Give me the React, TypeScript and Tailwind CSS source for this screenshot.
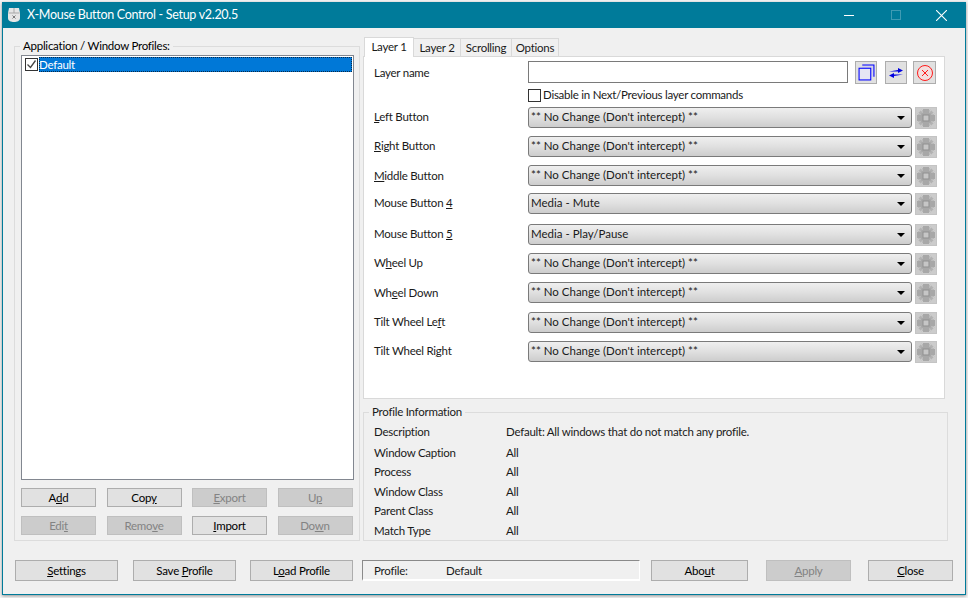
import type { ReactNode } from "react";

function Btn({
  children,
  width,
  disabled,
  className = "",
}: {
  children: ReactNode;
  width: string;
  disabled?: boolean;
  className?: string;
}) {
  return (
    <div
      className={`flex items-center justify-center border ${width} ${className} ${
        disabled
          ? "border-[#bfbfbf] bg-[#cccccc] text-[#838383]"
          : "border-[#adadad] bg-[#e1e1e1] text-black"
      }`}
    >
      <span className="pt-px">{children}</span>
    </div>
  );
}

function GearIcon() {
  return (
    <svg viewBox="0 0 20 20" className="h-[20px] w-[20px]">
      <g fill="#b2b2b2">
        <rect x="7" y="1" width="6" height="18" transform="rotate(45 10 10)" />
        <rect x="7" y="1" width="6" height="18" transform="rotate(-45 10 10)" />
      </g>
      <g fill="#a8a8a8">
        <rect x="7" y="1" width="6" height="18" />
        <rect x="1" y="7" width="18" height="6" />
        <circle cx="10" cy="10" r="6.5" />
      </g>
      <path d="M5.5 2.5l1 2M14.5 2.5l-1 2M5.5 17.5l1-2M14.5 17.5l-1-2M2.5 5.5l2 1M17.5 5.5l-2 1M2.5 14.5l2-1M17.5 14.5l-2-1" stroke="#e4e4e4" strokeWidth="1" strokeDasharray="1 1" />
      <rect x="7" y="7" width="6" height="6" fill="#c6c6c6" stroke="#8f8f8f" />
    </svg>
  );
}

function Combo({ children }: { children: ReactNode }) {
  return (
    <div className="flex h-[21px] w-[384px] items-center rounded-[3px] border-[1.5px] border-[#7a7a7a] bg-gradient-to-b from-[#efefef] via-[#e0e0e0] to-[#cdcdcd] pl-[2px] pr-[6px] tracking-normal">
      <span className="flex-1 pb-px">{children}</span>
      <span className="h-0 w-0 border-x-[4px] border-t-[4px] border-x-transparent border-t-black" />
    </div>
  );
}

const NO_CHANGE = "** No Change (Don't intercept) **";

const buttonRows: { label: ReactNode; value: ReactNode; height: string; labelClass: string }[] = [
  { label: <><u>L</u>eft Button</>, value: NO_CHANGE, height: "h-[29px]", labelClass: "" },
  { label: <><u>R</u>ight Button</>, value: NO_CHANGE, height: "h-[29px]", labelClass: "" },
  { label: <><u>M</u>iddle Button</>, value: NO_CHANGE, height: "h-[28px]", labelClass: "mt-px" },
  { label: <>Mouse Button <u>4</u></>, value: "Media - Mute", height: "h-[31px]", labelClass: "" },
  { label: <>Mouse Button <u>5</u></>, value: "Media - Play/Pause", height: "h-[29px]", labelClass: "" },
  { label: <>W<u>h</u>eel Up</>, value: NO_CHANGE, height: "h-[29px]", labelClass: "" },
  { label: <>Wh<u>e</u>el Down</>, value: NO_CHANGE, height: "h-[30px]", labelClass: "mt-px" },
  { label: <>Tilt Wheel Le<u>f</u>t</>, value: NO_CHANGE, height: "h-[29px]", labelClass: "" },
  { label: <>Tilt Wheel Ri<u>g</u>ht</>, value: NO_CHANGE, height: "h-[29px]", labelClass: "" },
];

const profileInfo = [
  { label: "Window Caption", height: "h-[19px]" },
  { label: "Process", height: "h-[20px]" },
  { label: "Window Class", height: "h-[19px]" },
  { label: "Parent Class", height: "h-[20px]" },
  { label: "Match Type", height: "h-[19px]" },
];

export default function App() {
  return (
    <div className="h-[598px] w-[968px] overflow-hidden bg-[#f4f4f4] [font-family:'Lato',sans-serif] text-[11.5px] leading-[16px] tracking-[-0.25px] text-[#1a1a1a]">
      <div className="ml-[2px] mt-[2px] flex h-[593px] w-[964px] flex-col border-x border-b border-[#007b9a] bg-[#f0f0f0] shadow-[0_1px_3px_rgba(0,0,0,0.4)]">
        {/* Title bar */}
        <div className="flex h-[26px] shrink-0 items-center bg-[#007b9a] text-white">
          <svg viewBox="0 0 14 16" className="ml-[4px] h-[18px] w-[14px]">
            <path d="M2 1h10l1 5v5c0 3-3 4-6 4s-6-1-6-4V6z" fill="#e6e6e6" />
            <path d="M1.5 6h11" stroke="#a8a8a8" />
            <path d="M7 1v5" stroke="#a8a8a8" />
            <path d="M5.5 8.5l3 3m0-3l-3 3" stroke="#7a7a7a" />
          </svg>
          <span className="ml-[6px] text-[12.5px] tracking-[-0.3px]">X-Mouse Button Control - Setup v2.20.5</span>
          <div className="ml-auto flex items-center">
            <span className="mr-[37px] h-px w-[10px] bg-white" />
            <span className="mr-[35px] h-[10px] w-[10px] border border-[#3f9bb3]" />
            <svg viewBox="0 0 10 10" className="mr-[18px] h-[11px] w-[11px]">
              <path d="M0 0l10 10M10 0L0 10" stroke="white" strokeWidth="1" />
            </svg>
          </div>
        </div>

        <div className="flex flex-1 flex-col pl-[11px]">
          <div className="flex">
            {/* Profiles */}
            <fieldset className="mt-[11px] flex h-[502px] w-[346px] flex-col border border-[#dcdcdc] pl-[6px]">
              <legend className="ml-[-1px] px-[3px] leading-[14px] text-black">Application / Window Profiles:</legend>
              <div className="mt-[2px] h-[425px] w-[333px] border border-[#828790] bg-white p-px">
                <div className="flex h-[15px] items-center">
                  <span className="ml-[2px] flex h-[13px] w-[13px] shrink-0 items-center justify-center border border-[#333333] bg-white">
                    <svg viewBox="0 0 11 11" className="h-[11px] w-[11px]">
                      <path d="M1.5 5.5l3 3 5-7" fill="none" stroke="#444444" strokeWidth="1.3" />
                    </svg>
                  </span>
                  <span className="ml-px flex h-[15px] flex-1 items-center bg-[#0078d7] pt-px text-white outline outline-1 -outline-offset-1 outline-dotted outline-[#0a2a4a]">
                    Default
                  </span>
                </div>
              </div>
              <div className="mt-[8px] flex gap-x-[10.5px]">
                <Btn width="w-[75px]" className="h-[19px]">A<u>d</u>d</Btn>
                <Btn width="w-[75px]" className="h-[19px]">Cop<u>y</u></Btn>
                <Btn width="w-[75px]" className="h-[19px]" disabled><u>E</u>xport</Btn>
                <Btn width="w-[75px]" className="h-[19px]" disabled>U<u>p</u></Btn>
              </div>
              <div className="mt-[9px] flex gap-x-[10.5px]">
                <Btn width="w-[75px]" className="h-[19px]" disabled>Edi<u>t</u></Btn>
                <Btn width="w-[75px]" className="h-[19px]" disabled>Remo<u>v</u>e</Btn>
                <Btn width="w-[75px]" className="h-[19px]"><u>I</u>mport</Btn>
                <Btn width="w-[75px]" className="h-[19px]" disabled>Do<u>w</u>n</Btn>
              </div>
            </fieldset>

            {/* Right column */}
            <div className="ml-[3px] mt-[9px] flex w-[585px] flex-col">
              <div className="flex h-[19px] items-end pl-px">
                <div className="z-10 -mb-px flex h-[20px] w-[50px] items-center justify-center border-x border-t border-[#d9d9d9] bg-white pb-[2px]">Layer 1</div>
                <div className="flex h-[18px] w-[47px] items-center justify-center border-r border-t border-[#d9d9d9] bg-[#f0f0f0] pt-px">Layer 2</div>
                <div className="flex h-[18px] w-[51px] items-center justify-center border-r border-t border-[#d9d9d9] bg-[#f0f0f0] pt-px">Scrolling</div>
                <div className="flex h-[18px] w-[47px] items-center justify-center border-r border-t border-[#d9d9d9] bg-[#f0f0f0] pt-px">Options</div>
              </div>
              <div className="h-[343px] w-[582px] border border-[#d9d9d9] bg-white pl-[10px]">
                <div className="mt-[4px] flex">
                  <span className="mt-[4px] w-[154px]">Layer name</span>
                  <div className="h-[22px] w-[320px] border border-[#7a7a7a] bg-white" />
                  <div className="ml-[7px] flex h-[23px] w-[22px] items-center justify-center border border-[#adadad] bg-[#e1e1e1]">
                    <svg viewBox="0 0 16 16" className="h-[17px] w-[17px]">
                      <rect x="4" y="1" width="11" height="11" fill="#c8c8f0" opacity="0.5" />
                      <path d="M4 1h11v11" fill="none" stroke="#0000ff" strokeWidth="1" />
                      <rect x="1" y="4" width="11" height="11" fill="#e6e6f4" stroke="#0000ff" />
                    </svg>
                  </div>
                  <div className="ml-[8px] flex h-[23px] w-[22px] items-center justify-center border border-[#adadad] bg-[#e1e1e1]">
                    <svg viewBox="0 0 16 12" className="h-[12px] w-[16px]">
                      <path d="M1 4.5L10 3V1l5 2.5L10 6V4.5z" fill="#0000e0" />
                      <path d="M15 7.5L6 9v2L1 8.5 6 6v1.5z" fill="#0000e0" />
                    </svg>
                  </div>
                  <div className="ml-[6px] flex h-[23px] w-[23px] items-center justify-center border border-[#adadad] bg-[#e1e1e1]">
                    <svg viewBox="0 0 18 18" className="h-[18px] w-[18px]">
                      <circle cx="9" cy="9" r="7.5" fill="#f3dede" stroke="#ff1a1a" />
                      <path d="M6 6l6 6m0-6l-6 6" stroke="#ff1a1a" />
                    </svg>
                  </div>
                </div>
                <div className="ml-[154px] mt-[3px] flex items-center">
                  <span className="h-[13px] w-[13px] border border-[#333333] bg-white" />
                  <span className="ml-[2px]">Disable in Next/Previous layer commands</span>
                </div>
                <div className="mt-[4px]">
                  {buttonRows.map((row, i) => (
                    <div key={i} className={`flex items-start ${row.height}`}>
                      <span className={`w-[154px] pt-[2px] ${row.labelClass}`}>{row.label}</span>
                      <Combo>{row.value}</Combo>
                      <div className="ml-[3px] flex h-[22px] w-[22px] items-center justify-center border border-[#c4c4c4] bg-[#cccccc]">
                        <GearIcon />
                      </div>
                    </div>
                  ))}
                </div>
              </div>

              <fieldset className="mt-[6px] h-[136px] w-[585px] border border-[#dcdcdc] pl-[10px]">
                <legend className="ml-[-5px] px-[3px] leading-[14px]">Profile Information</legend>
                <div className="mt-[5px] flex h-[21px]">
                  <span className="w-[132px]">Description</span>
                  <span>Default: All windows that do not match any profile.</span>
                </div>
                {profileInfo.map((item) => (
                  <div key={item.label} className={`flex ${item.height}`}>
                    <span className="w-[132px]">{item.label}</span>
                    <span>All</span>
                  </div>
                ))}
              </fieldset>
            </div>
          </div>

          {/* Bottom buttons */}
          <div className="mt-[19px] flex h-[21px] pl-[1px]">
            <Btn width="w-[103px]"><u>S</u>ettings</Btn>
            <Btn width="w-[103px]" className="ml-[15px]">Save <u>P</u>rofile</Btn>
            <Btn width="w-[103px]" className="ml-[14px]">L<u>o</u>ad Profile</Btn>
            <div className="ml-[9px] flex w-[278px] items-center border-l border-t border-[#8a8a8a] border-b-[2px] border-b-white border-r-[1px] border-r-white pl-[11px] pt-[2px]">
              <span className="w-[72px]">Profile:</span>
              <span>Default</span>
            </div>
            <Btn width="w-[97px]" className="ml-[11px]">Abo<u>u</u>t</Btn>
            <Btn width="w-[85px]" className="ml-[18px]" disabled><u>A</u>pply</Btn>
            <Btn width="w-[85px]" className="ml-[17px]"><u>C</u>lose</Btn>
          </div>
        </div>
      </div>
    </div>
  );
}
